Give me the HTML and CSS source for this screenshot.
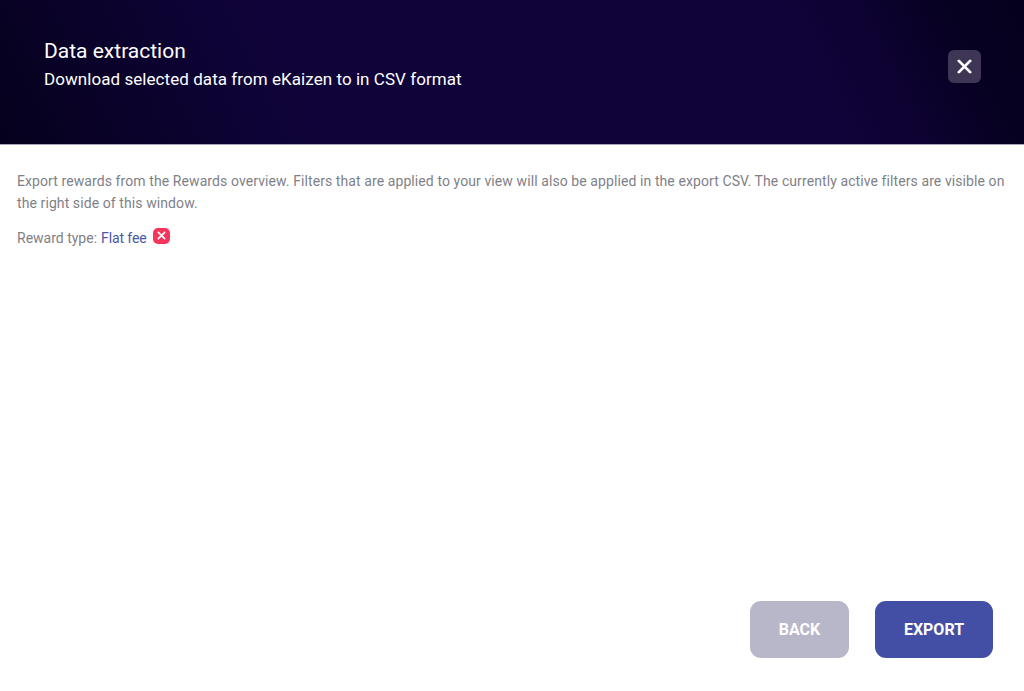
FILE: index.html
```html
<!DOCTYPE html>
<html lang="en">
<head>
<meta charset="utf-8">
<title>Data extraction</title>
<link rel="stylesheet" href="styles.css">
</head>
<body>
<div class="page">
  <header class="header">
    <div class="titles">
      <h1 class="title">Data extraction</h1>
      <p class="subtitle">Download selected data from eKaizen to in CSV format</p>
    </div>
    <button class="close" aria-label="Close">
      <svg class="close-icon" viewBox="0 0 16 16"><path d="M2 2L14 14M14 2L2 14"/></svg>
    </button>
  </header>
  <main class="content">
    <p class="intro">Export rewards from the Rewards overview. Filters that are applied to your view will also be applied in the export CSV. The currently active filters are visible on the right side of this window.</p>
    <div class="filter">
      <span class="filter-label">Reward type:</span>
      <span class="filter-value">Flat fee</span>
      <span class="chip"><svg class="chip-icon" viewBox="0 0 10 10"><path d="M1.5 1.5L8.5 8.5M8.5 1.5L1.5 8.5"/></svg></span>
    </div>
  </main>
  <footer class="footer">
    <button class="btn btn-back">BACK</button>
    <button class="btn btn-export">EXPORT</button>
  </footer>
</div>
</body>
</html>
```
FILE: styles.css
```css
* { box-sizing: border-box; }
html, body { height: 100%; margin: 0; }
body { background: #fff; font-family: "Roboto", "Open Sans", sans-serif; }
.page { display: flex; flex-direction: column; height: 691px; }
.header {
  height: 145px;
  flex: none;
  display: flex;
  align-items: center;
  justify-content: space-between;
  padding: 0 43px 0 44px;
  border-bottom: 1px solid #a9a5bd;
  background: linear-gradient(64deg, #05011c 0%, #0a0229 12%, #0e0335 24%, #10033a 32%, #10033a 76%, #0d0231 85%, #070122 92%, #05011c 100%);
}
.titles { color: #fff; padding-bottom: 14px; }
.title { margin: 0; font-size: 21px; line-height: 28px; font-weight: 400; }
.subtitle { margin: 0; font-size: 17px; line-height: 29px; font-weight: 400; letter-spacing: 0.06px; }
.close {
  width: 33px; height: 33px;
  margin-bottom: 12px;
  padding: 0;
  border: 0;
  border-radius: 6px;
  background: #3e3654;
  display: flex; align-items: center; justify-content: center;
}
.close-icon { width: 15px; height: 15px; fill: none; stroke: #fff; stroke-width: 3; stroke-linecap: round; }
.content { flex: 1; padding: 25px 17px 0; color: #7f7f88; font-size: 14px; letter-spacing: 0.09px; }
.intro { margin: 0 0 13px; line-height: 22px; }
.filter { display: flex; align-items: center; gap: 4px; line-height: 22px; letter-spacing: 0; }
.filter-value { color: #4a58a8; letter-spacing: -0.1px; }
.chip {
  width: 17px; height: 16px;
  margin: 0 0 5px 2px;
  border-radius: 5px;
  background: #f5365c;
  display: flex; align-items: center; justify-content: center;
}
.chip-icon { width: 9px; height: 9px; fill: none; stroke: #fff; stroke-width: 1.8; stroke-linecap: round; }
.footer { display: flex; justify-content: flex-end; gap: 26px; padding: 0 31px 33px; }
.btn {
  height: 57px;
  border: 0;
  border-radius: 11px;
  color: #fff;
  font-family: inherit;
  font-size: 16px;
  font-weight: 700;
  padding: 0;
}
.btn-back { width: 99px; background: #b8b7c9; }
.btn-export { width: 118px; background: #434fa5; }
```
